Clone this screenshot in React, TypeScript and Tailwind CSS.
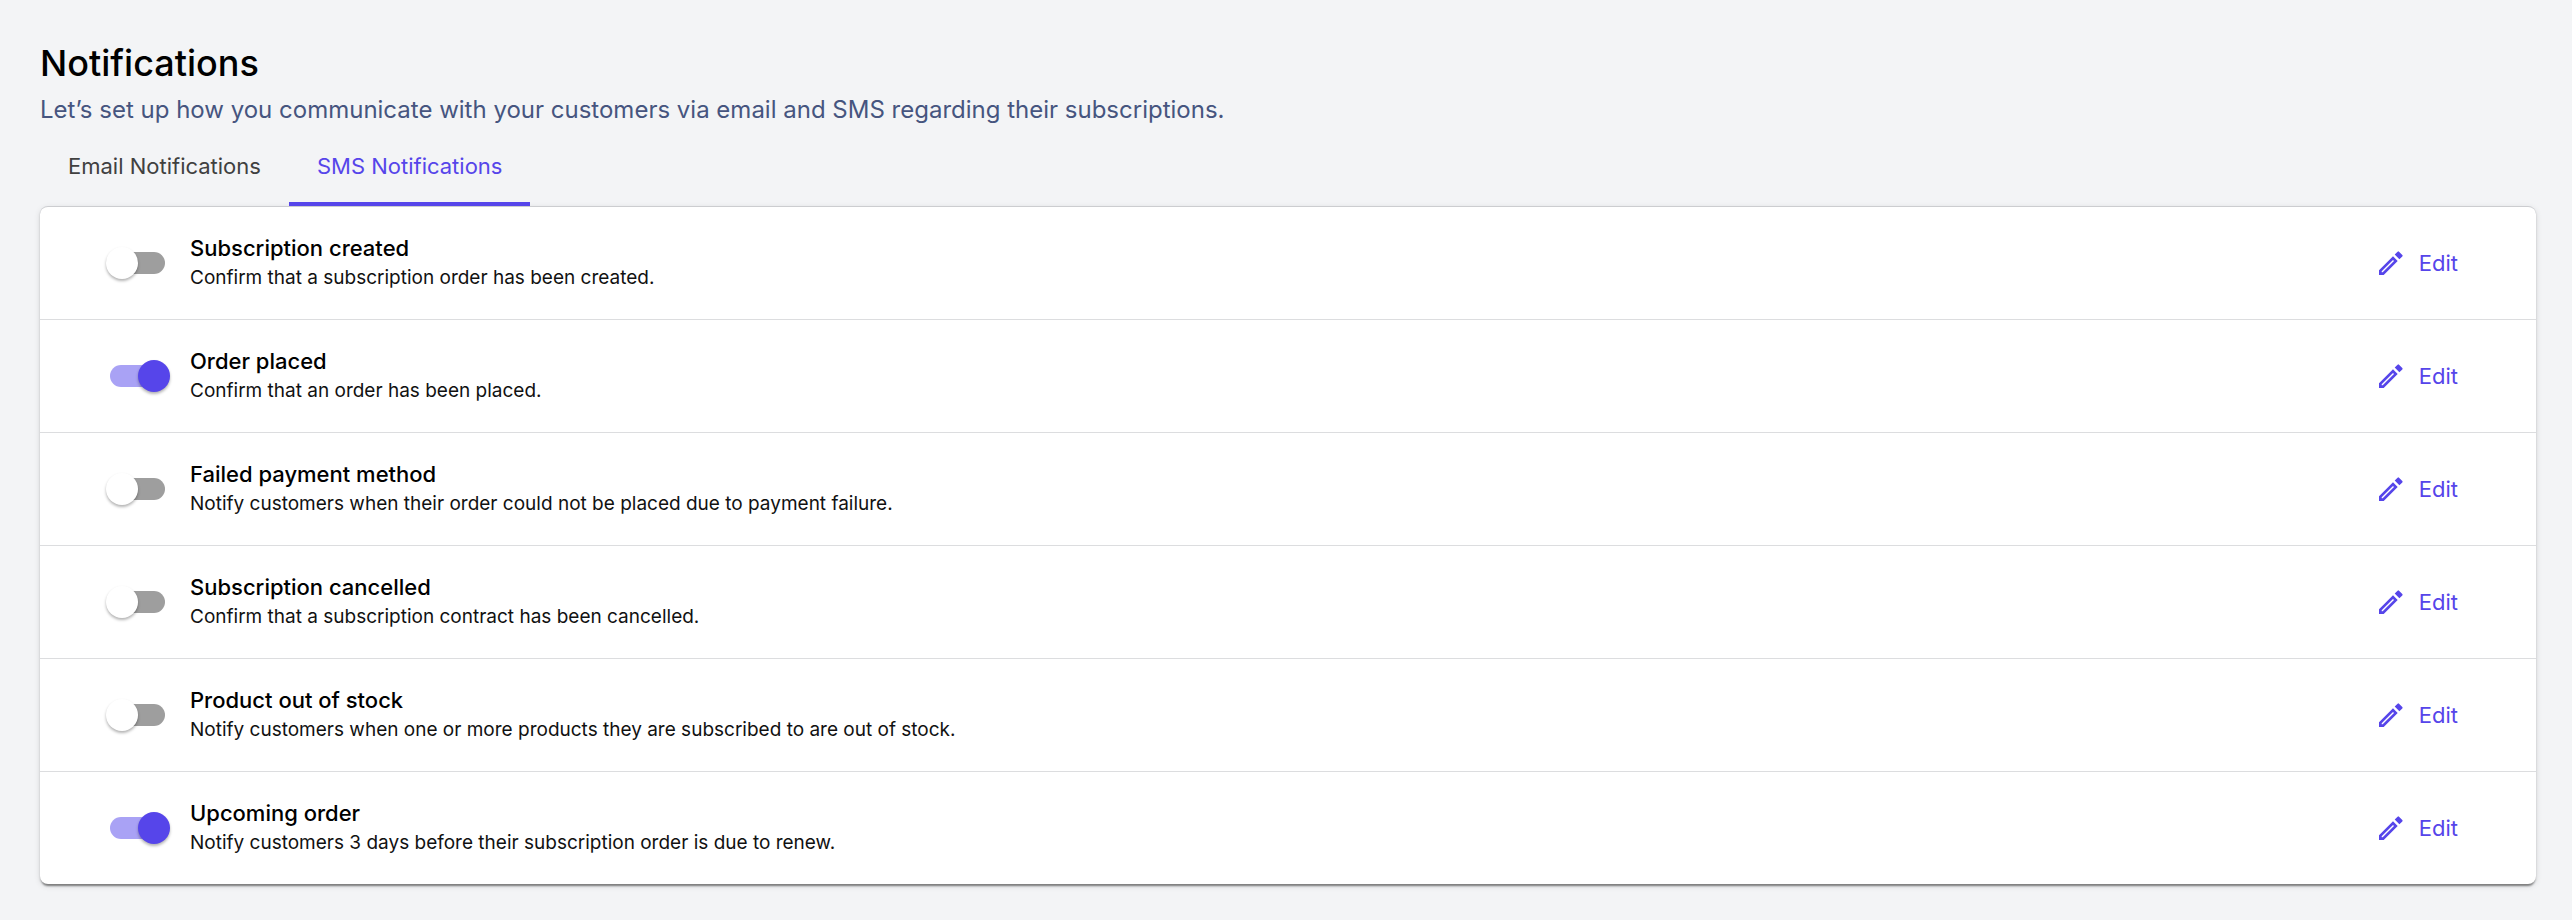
import React, { useState } from 'react';

interface NotificationItem {
  id: string;
  title: string;
  description: string;
  enabled: boolean;
}

const smsNotifications: NotificationItem[] = [
  {
    id: 'subscription-created',
    title: 'Subscription created',
    description: 'Confirm that a subscription order has been created.',
    enabled: false,
  },
  {
    id: 'order-placed',
    title: 'Order placed',
    description: 'Confirm that an order has been placed.',
    enabled: true,
  },
  {
    id: 'failed-payment',
    title: 'Failed payment method',
    description: 'Notify customers when their order could not be placed due to payment failure.',
    enabled: false,
  },
  {
    id: 'subscription-cancelled',
    title: 'Subscription cancelled',
    description: 'Confirm that a subscription contract has been cancelled.',
    enabled: false,
  },
  {
    id: 'out-of-stock',
    title: 'Product out of stock',
    description: 'Notify customers when one or more products they are subscribed to are out of stock.',
    enabled: false,
  },
  {
    id: 'upcoming-order',
    title: 'Upcoming order',
    description: 'Notify customers 3 days before their subscription order is due to renew.',
    enabled: true,
  },
];

const tabs = ['Email Notifications', 'SMS Notifications'];

const PencilIcon: React.FC = () => (
  <svg viewBox="0 0 24 24" fill="currentColor" fillRule="evenodd" className="size-6" aria-hidden="true">
    <path d="M0 19.3 14 5.3 18.7 10 4.7 24H0ZM2.7 20.3V21.3H3.7L15 10 14 9Z" />
    <path d="M15.7 3.6 18.6.7Q19.3 0 20 .7L23.3 4Q24 4.7 23.3 5.4L20.4 8.3Z" />
  </svg>
);

interface NotificationRowProps {
  item: NotificationItem;
  onToggle: (id: string) => void;
}

const NotificationRow: React.FC<NotificationRowProps> = ({ item, onToggle }) => (
  <li className="flex items-center py-[26px] pl-[70px] pr-[78px]">
    <input
      id={item.id}
      type="checkbox"
      role="switch"
      checked={item.enabled}
      onChange={() => onToggle(item.id)}
      className="relative h-[22px] w-[55px] shrink-0 cursor-pointer appearance-none rounded-full bg-[#9e9e9e] before:absolute before:-left-1 before:-top-[5px] before:size-8 before:rounded-full before:bg-white before:shadow-[0_2px_3px_rgba(0,0,0,0.3)] before:transition-transform checked:bg-[#a9a2f5] checked:before:translate-x-8 checked:before:bg-[#5645ea]"
    />
    <div className="ml-[25px] min-w-0 flex-1">
      <label htmlFor={item.id} className="block cursor-pointer text-[22px] leading-[30px] font-medium text-black">
        {item.title}
      </label>
      <p className="text-[19px] leading-[30px] text-[#111111]">{item.description}</p>
    </div>
    <button className="flex items-center gap-4 text-[22px] leading-8 text-[#5645ea]">
      <PencilIcon />
      Edit
    </button>
  </li>
);

const App: React.FC = () => {
  const [activeTab, setActiveTab] = useState('SMS Notifications');
  const [items, setItems] = useState(smsNotifications);

  const handleToggle = (id: string) => {
    setItems(prev => prev.map(item => (item.id === id ? { ...item, enabled: !item.enabled } : item)));
  };

  return (
    <main className="min-h-screen bg-[#f3f4f6] pt-10 pr-9 pb-9 pl-10 font-['Inter',sans-serif]">
      <h1 className="text-4xl leading-[46px] font-medium text-black">Notifications</h1>
      <p className="mt-1 text-2xl leading-10 text-[#46557f]">
        Let’s set up how you communicate with your customers via email and SMS regarding their subscriptions.
      </p>
      <div role="tablist" className="mt-1 flex">
        {tabs.map(tab => (
          <button
            key={tab}
            role="tab"
            aria-selected={activeTab === tab}
            onClick={() => setActiveTab(tab)}
            className={`border-b-4 px-7 pt-4 pb-5 text-[22px] leading-8 ${
              activeTab === tab ? 'border-[#5645ea] text-[#5645ea]' : 'border-transparent text-[#404040]'
            }`}
          >
            {tab}
          </button>
        ))}
      </div>
      <ul className="divide-y divide-[#dcdddf] rounded-lg border-t border-[#cccdd0] bg-white shadow-[0_4px_2px_-2px_rgba(0,0,0,0.3),0_2px_2px_rgba(0,0,0,0.2),0_2px_6px_rgba(0,0,0,0.12)]">
        {items.map(item => (
          <NotificationRow key={item.id} item={item} onToggle={handleToggle} />
        ))}
      </ul>
    </main>
  );
};

export default App;
